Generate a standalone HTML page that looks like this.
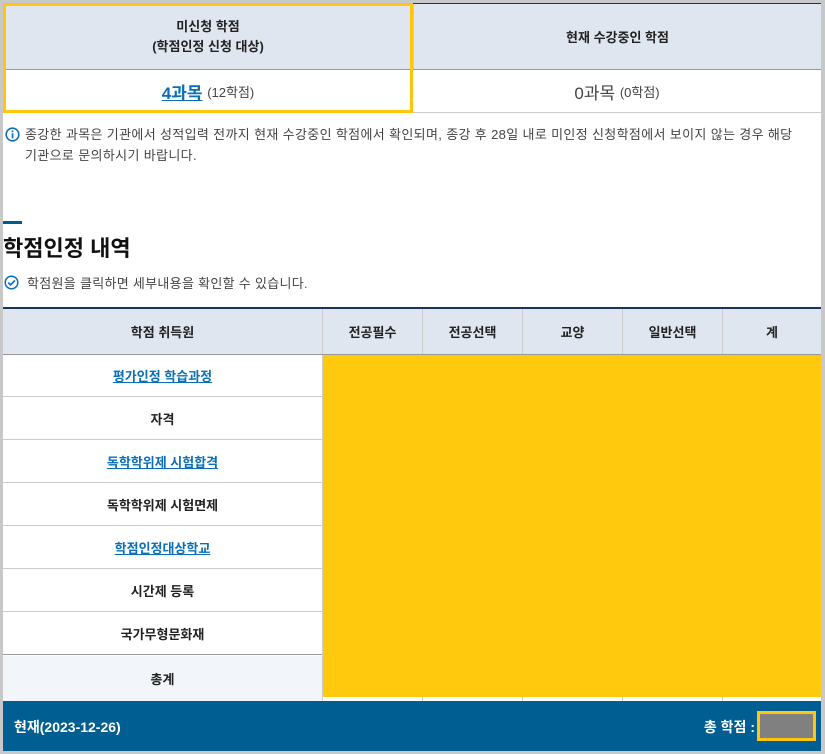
<!DOCTYPE html>
<html><head><meta charset="utf-8"><style>
*{margin:0;padding:0;box-sizing:border-box}
body{width:825px;height:754px;background:#c8c8c8;position:relative;overflow:hidden;font-family:"Liberation Sans","Noto Sans CJK KR",sans-serif;color:#222}
#p{position:absolute;left:3px;top:3px;width:818px;height:748px;background:#fff;overflow:hidden}
.a{position:absolute}
.c{display:flex;align-items:center;justify-content:center;text-align:center}
a{color:#0a6fb8;text-decoration:underline}
</style></head><body><div id="p">
<div class="a" style="left:0;top:0;width:818px;height:1px;background:#1a3560"></div>
<div class="a c" style="left:0;top:1px;width:410px;height:65px;background:#dfe6f0;font-size:13px;font-weight:bold;line-height:20px">미신청 학점<br>(학점인정 신청 대상)</div>
<div class="a c" style="left:410px;top:1px;width:408px;height:65px;background:#dfe6f0;font-size:13px;font-weight:bold;border-left:1px solid #ccc">현재 수강중인 학점</div>
<div class="a" style="left:0;top:66px;width:818px;height:1px;background:#999"></div>
<div class="a c" style="left:0;top:67px;width:410px;height:42px;font-size:17px"><a style="font-weight:bold">4과목</a>&nbsp;<span style="font-size:13px;color:#444">(12학점)</span></div>
<div class="a c" style="left:410px;top:67px;width:408px;height:42px;font-size:17px;color:#444">0과목&nbsp;<span style="font-size:13px">(0학점)</span></div>
<div class="a" style="left:0;top:109px;width:818px;height:1px;background:#ccc"></div>
<div class="a" style="left:0;top:0;width:410px;height:110px;border:3px solid #ffc60b"></div>
<svg class="a" style="left:2px;top:124px" width="15" height="15" viewBox="0 0 15 15"><circle cx="7.5" cy="7.5" r="6.3" fill="none" stroke="#0a6fb8" stroke-width="1.6"/><rect x="6.7" y="6.3" width="1.7" height="5" fill="#0a6fb8"/><rect x="6.7" y="3.5" width="1.7" height="1.7" fill="#0a6fb8"/></svg>
<div class="a" style="left:22px;top:121px;width:795px;font-size:13px;line-height:21px;color:#444;letter-spacing:0.35px;word-break:keep-all">종강한 과목은 기관에서 성적입력 전까지 현재 수강중인 학점에서 확인되며, 종강 후 28일 내로 미인정 신청학점에서 보이지 않는 경우 해당 기관으로 문의하시기 바랍니다.</div>
<div class="a" style="left:0;top:218px;width:19px;height:3px;background:#005b91"></div>
<div class="a" style="left:0;top:228px;font-size:22px;font-weight:bold;color:#111">학점인정 내역</div>
<svg class="a" style="left:1px;top:272px" width="15" height="15" viewBox="0 0 15 15"><circle cx="7.5" cy="7.5" r="6.3" fill="none" stroke="#0a6fb8" stroke-width="1.5"/><path d="M4.3 7.6l2.3 2.3 4.3-4.5" fill="none" stroke="#0a6fb8" stroke-width="1.7"/></svg>
<div class="a" style="left:24px;top:270px;font-size:13px;color:#444;letter-spacing:0.3px">학점원을 클릭하면 세부내용을 확인할 수 있습니다.</div>
<div class="a" style="left:0;top:304px;width:818px;height:2px;background:#1a3560"></div>
<div class="a" style="left:0;top:306px;width:818px;height:45px;background:#dfe6f0"></div>
<div class="a c" style="left:0;top:306px;width:319px;height:45px;font-size:13px;font-weight:bold">학점 취득원</div>
<div class="a c" style="left:319px;top:306px;width:100px;height:45px;font-size:13px;font-weight:bold;border-left:1px solid #ccc">전공필수</div>
<div class="a c" style="left:419px;top:306px;width:100px;height:45px;font-size:13px;font-weight:bold;border-left:1px solid #ccc">전공선택</div>
<div class="a c" style="left:519px;top:306px;width:100px;height:45px;font-size:13px;font-weight:bold;border-left:1px solid #ccc">교양</div>
<div class="a c" style="left:619px;top:306px;width:100px;height:45px;font-size:13px;font-weight:bold;border-left:1px solid #ccc">일반선택</div>
<div class="a c" style="left:719px;top:306px;width:99px;height:45px;font-size:13px;font-weight:bold;border-left:1px solid #ccc">계</div>
<div class="a" style="left:0;top:351px;width:818px;height:1px;background:#999"></div>
<div class="a c" style="left:0;top:352px;width:319px;height:42px;font-size:13px;font-weight:bold;border-bottom:1px solid #ccc"><a>평가인정 학습과정</a></div>
<div class="a c" style="left:0;top:395px;width:319px;height:42px;font-size:13px;font-weight:bold;border-bottom:1px solid #ccc">자격</div>
<div class="a c" style="left:0;top:438px;width:319px;height:42px;font-size:13px;font-weight:bold;border-bottom:1px solid #ccc"><a>독학학위제 시험합격</a></div>
<div class="a c" style="left:0;top:481px;width:319px;height:42px;font-size:13px;font-weight:bold;border-bottom:1px solid #ccc">독학학위제 시험면제</div>
<div class="a c" style="left:0;top:524px;width:319px;height:42px;font-size:13px;font-weight:bold;border-bottom:1px solid #ccc"><a>학점인정대상학교</a></div>
<div class="a c" style="left:0;top:567px;width:319px;height:42px;font-size:13px;font-weight:bold;border-bottom:1px solid #ccc">시간제 등록</div>
<div class="a c" style="left:0;top:610px;width:319px;height:42px;font-size:13px;font-weight:bold;border-bottom:1px solid #999">국가무형문화재</div>
<div class="a c" style="left:0;top:653px;width:319px;height:45px;font-size:13px;font-weight:bold;background:#f2f6fa">총계</div>
<div class="a" style="left:319px;top:352px;width:1px;height:346px;background:#ccc"></div>
<div class="a" style="left:419px;top:692px;width:1px;height:6px;background:#ccc"></div>
<div class="a" style="left:519px;top:692px;width:1px;height:6px;background:#ccc"></div>
<div class="a" style="left:619px;top:692px;width:1px;height:6px;background:#ccc"></div>
<div class="a" style="left:719px;top:692px;width:1px;height:6px;background:#ccc"></div>
<div class="a" style="left:320px;top:352px;width:498px;height:342px;background:#ffc90e"></div>
<div class="a" style="left:0;top:698px;width:818px;height:50px;background:#005e92"></div>
<div class="a" style="left:11px;top:714px;font-size:14px;font-weight:bold;color:#fff">현재(2023-12-26)</div>
<div class="a" style="right:66px;top:714px;font-size:14px;font-weight:bold;color:#fff;white-space:nowrap">총 학점 :</div>
<div class="a" style="left:754px;top:708px;width:59px;height:30px;border:3px solid #ffc60b;background:#808080"></div>
</div></body></html>
